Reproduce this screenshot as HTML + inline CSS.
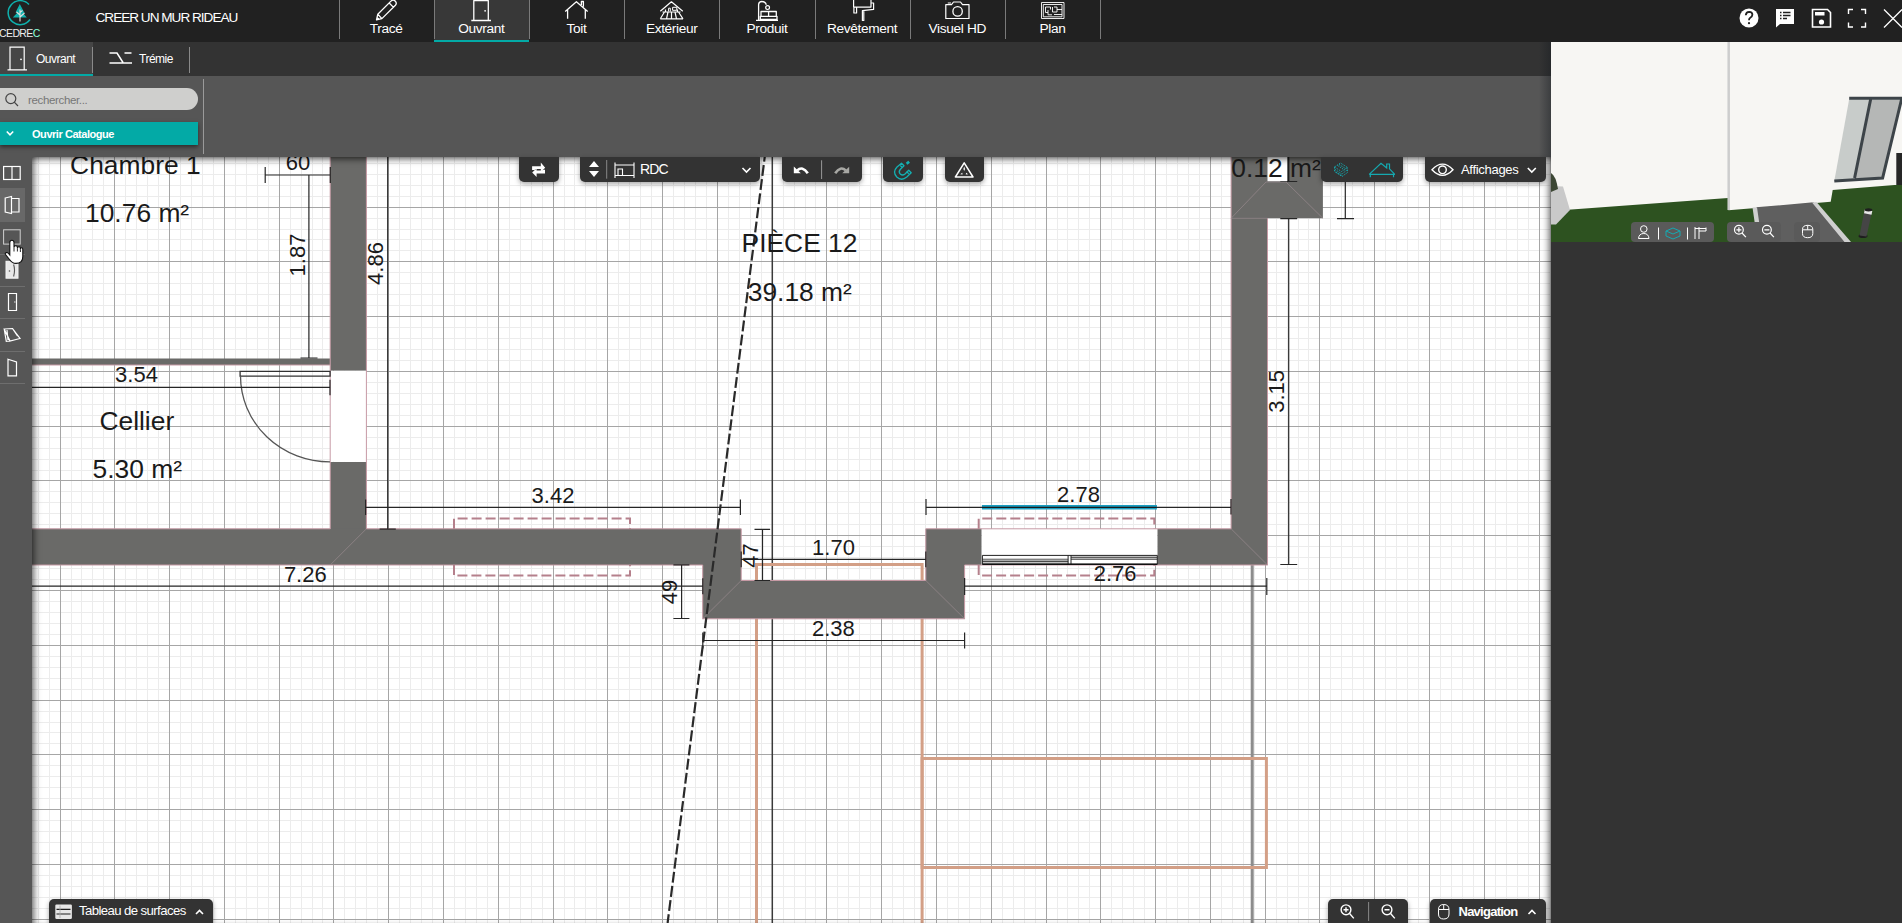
<!DOCTYPE html>
<html><head><meta charset="utf-8"><title>Cedreo</title><style>html,body{margin:0;padding:0;width:1902px;height:923px;overflow:hidden;background:#212121;font-family:"Liberation Sans",sans-serif}
.a{position:absolute}
.tab{text-align:center;font-size:13.7px;color:#fff;line-height:16px;letter-spacing:-0.35px}
.sb{font-size:12px;color:#fff;line-height:14px;letter-spacing:-0.5px}
</style></head><body>
<div class="a" style="left:0;top:0;width:1902px;height:42px;background:#212121"></div>
<svg class="a" style="left:0;top:0" width="44" height="40" viewBox="0 0 44 40">
<path d="M29 4.5 A12 12 0 1 0 30 19.5" stroke="#0fb1ad" stroke-width="1.5" fill="none"/>
<path d="M19.8 4 L15.5 12.5 L17.5 12.5 L12.8 17.5 L26.8 17.5 L23 13 L24.5 13Z" fill="#0fb1ad"/>
<path d="M20 21.5 V9.5 M20 15 L16.5 12 M20 17 L24.5 13 M20 12.5 L22.5 10.5" stroke="#e0e0e0" stroke-width="1.1" fill="none"/>
</svg>
<div class="a" style="left:-1px;top:27px;font-size:10.5px;color:#eee;letter-spacing:-0.6px;line-height:12px">CEDRE<span style="color:#8fd">C</span></div>
<div class="a t" style="left:95.5px;top:9.5px;font-size:13.6px;color:#fff;line-height:16px;letter-spacing:-1.0px">CREER UN MUR RIDEAU</div>
<div class="a" style="left:338.5px;top:0;width:1px;height:39px;background:#7a7a7a"></div>
<div class="a tab" style="left:338.5px;top:21.3px;width:95.2px">Tracé</div>
<div class="a" style="left:433.7px;top:0;width:95.2px;height:40px;background:#383838"></div>
<div class="a" style="left:433.7px;top:40px;width:95.2px;height:2px;background:#03aaa6"></div>
<div class="a" style="left:433.7px;top:0;width:1px;height:39px;background:#7a7a7a"></div>
<div class="a tab" style="left:433.7px;top:21.3px;width:95.2px">Ouvrant</div>
<div class="a" style="left:528.9px;top:0;width:1px;height:39px;background:#7a7a7a"></div>
<div class="a tab" style="left:528.9px;top:21.3px;width:95.2px">Toit</div>
<div class="a" style="left:624.1px;top:0;width:1px;height:39px;background:#7a7a7a"></div>
<div class="a tab" style="left:624.1px;top:21.3px;width:95.2px">Extérieur</div>
<div class="a" style="left:719.3px;top:0;width:1px;height:39px;background:#7a7a7a"></div>
<div class="a tab" style="left:719.3px;top:21.3px;width:95.2px">Produit</div>
<div class="a" style="left:814.5px;top:0;width:1px;height:39px;background:#7a7a7a"></div>
<div class="a tab" style="left:814.5px;top:21.3px;width:95.2px">Revêtement</div>
<div class="a" style="left:909.7px;top:0;width:1px;height:39px;background:#7a7a7a"></div>
<div class="a tab" style="left:909.7px;top:21.3px;width:95.2px">Visuel HD</div>
<div class="a" style="left:1004.9px;top:0;width:1px;height:39px;background:#7a7a7a"></div>
<div class="a tab" style="left:1004.9px;top:21.3px;width:95.2px">Plan</div>
<svg class="a" style="left:330px;top:0" width="780" height="24" viewBox="330 0 780 24">
<g stroke="#fff" fill="none" stroke-width="1.3" stroke-linejoin="round">
<path d="M376.5 19.8 L377.8 14.2 L391.2 0.9 Q393.3 -0.8 395.3 1.2 Q397.2 3.3 395.4 5.3 L381.9 18.6 Z M377.8 14.2 L381.9 18.6 M389.2 3 L393.3 7.1 M377 17.5 L379 19.3"/>
<path d="M473.8 20.3 V0.6 H488.3 V20.3 M471.3 20.5 H491"/><circle cx="485.1" cy="10.8" r="0.9" fill="#fff" stroke="none"/>
<path d="M565.2 11.5 L576.4 1.8 L587.7 11.5 M567.6 9.5 V18.8 M585.3 9.5 V18.8 M581.4 5 V1.5 H583.4 V6.8"/>
<path d="M660.3 11.3 L671.4 1.8 L682.8 11.3 M662.5 12 H680.5 M660.3 18.8 H683 M664.5 12 L660.3 18.8 M668 12 L666.5 18.8 M671.5 12 V18.8 M675 12 L676.5 18.8 M678.5 12 L683 18.8 M665.5 9.5 V12 M677.5 9.5 V12" stroke-width="1.2"/>
<path d="M668.6 11.5 V8.2 H670.3 V11.5 M672.6 7.3 H676.8 V10.3 H672.6Z" stroke-width="1"/>
<path d="M758.6 20 V4.5 Q758.8 1.5 762 1.5 Q765.3 1.5 766.3 4.8 M756 20.3 H778 M761 16 V11.5 H776.3 V16 M760.3 16.3 H777 V19.5 H760.3Z M768.6 11.5 V16.3"/>
<circle cx="767.6" cy="7.6" r="1.9" stroke-width="1.2"/>
<path d="M853.6 -1 V7.1 H871 V-1 M871 3 H873.6 V9.4 L862.4 10.6 V20.5 H863.8 V10.6 M853.9 7.1 V13 H856.6 V7.1" stroke-width="1.2"/>
<path d="M945.8 4.6 H951.5 L953.5 2 H960.5 L962.5 4.6 H969 V18.5 H945.8Z M947.8 3 H951" stroke-width="1.2"/>
<circle cx="957.6" cy="11.4" r="4.7" stroke-width="1.3"/>
<path d="M1041.5 2.5 H1064 V18.5 H1041.5Z M1043.3 4.5 H1062 V16.8 H1043.3Z M1045.5 7 H1050.5 V9.5 M1045.5 7V12.5 H1048 M1048 10V14.8 H1052 M1052.5 7V12 H1057 V7 H1054 M1057 9.5H1062 M1054 14.5H1062" stroke-width="0.9"/>
</g></svg>
<div class="a" style="left:1100.1px;top:0;width:1px;height:39px;background:#7a7a7a"></div>
<svg class="a" style="left:1735px;top:5px" width="167" height="26" viewBox="1735 5 167 26">
<circle cx="1749" cy="18" r="9.5" fill="#fff"/>
<path d="M1745.8 15.2 Q1746 11.8 1749.2 11.8 Q1752.4 12 1752.4 14.8 Q1752.3 16.8 1750 18 Q1749 18.7 1749 20.3" stroke="#212121" stroke-width="1.8" fill="none"/>
<circle cx="1749" cy="23.2" r="1.1" fill="#212121"/>
<path d="M1776 9 H1794 V24 H1780 L1776 27.5Z" fill="#fff"/>
<path d="M1780 12.5H1781.5 M1783 12.5H1790.5 M1780 15.5H1781.5 M1783 15.5H1790.5 M1780 18.5H1781.5 M1783 18.5H1787" stroke="#212121" stroke-width="1.5"/>
<path d="M1812.5 9.5 H1827.5 L1830.5 12.5 V27 H1812.5Z" stroke="#fff" stroke-width="1.6" fill="none"/>
<rect x="1815" y="12" width="9.5" height="3.5" fill="#fff"/>
<circle cx="1821.5" cy="22" r="2.6" fill="#fff"/>
<path d="M1848.5 14 V9.5 H1853 M1861 9.5 H1865.5 V14 M1865.5 22.5 V27 H1861 M1853 27 H1848.5 V22.5" stroke="#fff" stroke-width="1.4" fill="none"/>
<path d="M1884 9.5 L1902 27.5 M1902 9.5 L1884 27.5" stroke="#fff" stroke-width="1.3"/>
</svg>
<div class="a" style="left:0;top:42px;width:1551px;height:34px;background:#333"></div>
<div class="a" style="left:0;top:42px;width:93px;height:32px;background:#464646"></div>
<div class="a" style="left:0;top:74px;width:93px;height:2px;background:#03aaa6"></div>
<div class="a" style="left:92px;top:47px;width:1px;height:26px;background:#8a8a8a"></div>
<div class="a" style="left:189px;top:47px;width:1px;height:26px;background:#8a8a8a"></div>
<svg class="a" style="left:6px;top:46px" width="24" height="26" viewBox="0 0 24 26"><path d="M4 23.5V1.2H18.2V23.5 M1.5 23.8H21" stroke="#fff" stroke-width="1.2" fill="none"/><circle cx="15" cy="13.3" r="0.9" fill="#fff"/></svg>
<div class="a sb" style="left:36px;top:52px">Ouvrant</div>
<svg class="a" style="left:107px;top:50px" width="28" height="20" viewBox="0 0 28 20"><path d="M2.5 3H10 L16 12.5 M2.5 13H25 M17.5 3H24.5" stroke="#fff" stroke-width="1.5" fill="none"/></svg>
<div class="a sb" style="left:139px;top:52px">Trémie</div>
<div class="a" style="left:0;top:76px;width:1551px;height:81px;background:#565656"></div>
<div class="a" style="left:1539px;top:42px;width:12px;height:115px;background:linear-gradient(to right,rgba(20,25,30,0),rgba(20,25,30,0.4))"></div>
<div class="a" style="left:203px;top:79px;width:1px;height:75px;background:#9a9a9a"></div>
<div class="a" style="left:-12px;top:88px;width:210px;height:22px;border-radius:11px;background:#cfcfcd"></div>
<svg class="a" style="left:4px;top:92px" width="16" height="16" viewBox="0 0 16 16"><circle cx="6.8" cy="6.6" r="5" stroke="#444" stroke-width="1.2" fill="none"/><path d="M10.3 10.2L14 14" stroke="#444" stroke-width="1.2"/></svg>
<div class="a" style="left:28px;top:93px;font-size:11.5px;color:#767676;line-height:14px;letter-spacing:-0.35px">rechercher...</div>
<div class="a" style="left:0;top:122px;width:198px;height:23px;background:#03aaa6;box-shadow:0 2px 4px rgba(0,0,0,0.5)"></div>
<svg class="a" style="left:5px;top:129px" width="10" height="9" viewBox="0 0 10 9"><path d="M1.8 2.5L5 5.8L8.2 2.5" stroke="#fff" stroke-width="1.6" fill="none"/></svg>
<div class="a" style="left:32px;top:127px;font-size:11px;font-weight:bold;color:#fff;line-height:14px;letter-spacing:-0.45px">Ouvrir Catalogue</div>
<svg class="a" style="left:0;top:0" width="1902" height="923" viewBox="0 0 1902 923"><defs><clipPath id="cv"><rect x="32" y="157" width="1519" height="766"/></clipPath></defs><g clip-path="url(#cv)"><rect x="32" y="157" width="1519" height="766" fill="#fff"/><path d="M38.5 157V923M49.5 157V923M71.5 157V923M81.5 157V923M92.5 157V923M103.5 157V923M125.5 157V923M136.5 157V923M147.5 157V923M158.5 157V923M180.5 157V923M191.5 157V923M202.5 157V923M213.5 157V923M235.5 157V923M246.5 157V923M257.5 157V923M268.5 157V923M290.5 157V923M301.5 157V923M312.5 157V923M322.5 157V923M344.5 157V923M355.5 157V923M366.5 157V923M377.5 157V923M399.5 157V923M410.5 157V923M421.5 157V923M432.5 157V923M454.5 157V923M465.5 157V923M476.5 157V923M487.5 157V923M509.5 157V923M520.5 157V923M531.5 157V923M542.5 157V923M564.5 157V923M574.5 157V923M585.5 157V923M596.5 157V923M618.5 157V923M629.5 157V923M640.5 157V923M651.5 157V923M673.5 157V923M684.5 157V923M695.5 157V923M706.5 157V923M728.5 157V923M739.5 157V923M750.5 157V923M761.5 157V923M783.5 157V923M794.5 157V923M805.5 157V923M815.5 157V923M837.5 157V923M848.5 157V923M859.5 157V923M870.5 157V923M892.5 157V923M903.5 157V923M914.5 157V923M925.5 157V923M947.5 157V923M958.5 157V923M969.5 157V923M980.5 157V923M1002.5 157V923M1013.5 157V923M1024.5 157V923M1035.5 157V923M1057.5 157V923M1067.5 157V923M1078.5 157V923M1089.5 157V923M1111.5 157V923M1122.5 157V923M1133.5 157V923M1144.5 157V923M1166.5 157V923M1177.5 157V923M1188.5 157V923M1199.5 157V923M1221.5 157V923M1232.5 157V923M1243.5 157V923M1254.5 157V923M1276.5 157V923M1287.5 157V923M1298.5 157V923M1308.5 157V923M1330.5 157V923M1341.5 157V923M1352.5 157V923M1363.5 157V923M1385.5 157V923M1396.5 157V923M1407.5 157V923M1418.5 157V923M1440.5 157V923M1451.5 157V923M1462.5 157V923M1473.5 157V923M1495.5 157V923M1506.5 157V923M1517.5 157V923M1528.5 157V923M1550.5 157V923M32 163.5H1551M32 174.5H1551M32 185.5H1551M32 196.5H1551M32 218.5H1551M32 229.5H1551M32 239.5H1551M32 250.5H1551M32 272.5H1551M32 283.5H1551M32 294.5H1551M32 305.5H1551M32 327.5H1551M32 338.5H1551M32 349.5H1551M32 360.5H1551M32 382.5H1551M32 393.5H1551M32 404.5H1551M32 415.5H1551M32 437.5H1551M32 448.5H1551M32 459.5H1551M32 470.5H1551M32 491.5H1551M32 502.5H1551M32 513.5H1551M32 524.5H1551M32 546.5H1551M32 557.5H1551M32 568.5H1551M32 579.5H1551M32 601.5H1551M32 612.5H1551M32 623.5H1551M32 634.5H1551M32 656.5H1551M32 667.5H1551M32 678.5H1551M32 689.5H1551M32 711.5H1551M32 722.5H1551M32 732.5H1551M32 743.5H1551M32 765.5H1551M32 776.5H1551M32 787.5H1551M32 798.5H1551M32 820.5H1551M32 831.5H1551M32 842.5H1551M32 853.5H1551M32 875.5H1551M32 886.5H1551M32 897.5H1551M32 908.5H1551" stroke="#ececec" stroke-width="1" fill="none"/>
<path d="M60.5 157V923M114.5 157V923M169.5 157V923M224.5 157V923M279.5 157V923M333.5 157V923M388.5 157V923M443.5 157V923M498.5 157V923M553.5 157V923M607.5 157V923M662.5 157V923M717.5 157V923M772.5 157V923M826.5 157V923M881.5 157V923M936.5 157V923M991.5 157V923M1046.5 157V923M1100.5 157V923M1155.5 157V923M1210.5 157V923M1265.5 157V923M1319.5 157V923M1374.5 157V923M1429.5 157V923M1484.5 157V923M1539.5 157V923M32 207.5H1551M32 261.5H1551M32 316.5H1551M32 371.5H1551M32 426.5H1551M32 480.5H1551M32 535.5H1551M32 590.5H1551M32 645.5H1551M32 700.5H1551M32 754.5H1551M32 809.5H1551M32 864.5H1551M32 919.5H1551" stroke="#a6a6a6" stroke-width="1" fill="none"/><path d="M772.3 157V923" stroke="#3a3a3a" stroke-width="1.5"/>
<path d="M1252.2 565V923" stroke="#8c8c8c" stroke-width="3"/>
<path d="M756.5 923V564.6H922.1V923" stroke="#d39f86" stroke-width="3" fill="none"/>
<rect x="922.1" y="758.5" width="344.3" height="109" stroke="#d39f86" stroke-width="3" fill="none"/>
<path d="M330.2 157H366.4V370.8H330.2Z M330.2 461.9H366.4V529H330.2Z" fill="#6a6a68"/>
<path d="M32 358.5H330.2V365H32Z" fill="#6a6a68"/>
<path d="M32 528.8H741.2V580.5H925.8V528.8H981.7V565H964.6V618.8H702.7V565H32Z" fill="#6a6a68"/>
<path d="M1231.1 157H1322.9V218.3H1267.5V565H1157.3V528.8H1231.1Z" fill="#6a6a68"/>
<rect x="330.2" y="370.8" width="36.2" height="91.1" fill="#fff"/><rect x="981.7" y="528.8" width="175.6" height="36.2" fill="#fff"/>
<path d="M330.2 157V529M366.4 157V529 M32 365H330.2 M32 528.8H330.2M366.4 528.8H741.2V580.5H925.8V528.8H1157.3 M32 565H702.7V618.8H964.6V565H1267.5V218.3 M1157.3 528.8H1231.1V157" stroke="#c79aa5" stroke-width="1" fill="none"/>
<path d="M330.2 565L366.4 528.8 M702.7 618.8L741.2 580.5 M964.6 618.8L925.8 580.5 M1231.1 528.8L1267.5 565 M1231.1 218.3L1266 182H1286L1322.9 218.3 M1231.1 218.3H1267.5" stroke="#9a8a8f" stroke-width="0.9" fill="none" opacity="0.75"/>
<path d="M240.1 371.3H330.1V376.1H240.1Z" stroke="#333" stroke-width="1.3" fill="none"/>
<path d="M240.5 376 A89.5 86 0 0 0 330 461.9" stroke="#555" stroke-width="1.3" fill="none"/>
<rect x="982.4" y="559.2" width="85.7" height="4.8" fill="#c2c2c2"/><rect x="1071" y="555.9" width="86" height="3.5" fill="#bdbdbd"/>
<path d="M982.4 559.2H1068.1 M1071 557.5H1157 M1071 559.4H1157" stroke="#555" stroke-width="0.9" fill="none"/>
<path d="M982.4 561.35H1068.1" stroke="#333" stroke-width="1" fill="none"/>
<path d="M982.4 555.4H1157.3V564.3H982.4Z M1068.1 555.4V564.3 M1071 555.4V564.3" stroke="#222" stroke-width="1" fill="none"/>
<path d="M982.4 564.2H1157.3" stroke="#111" stroke-width="1.4"/>
<path d="M454 528.8V518.4H630V528.8 M454 565V575.6H630V565 M978.7 528.8V518.4H1154.3V528.8 M978.7 565V575.6H1154.3V565" stroke="#b5808c" stroke-width="2" stroke-dasharray="10 4" fill="none"/>
<path d="M265.2 175H330.3 M265.2 167V183 M330.3 167V183 M308.9 175V358 M300.5 358H317.5 M387.7 157V529.2 M379.6 529.2H395.8 M32 387.4H330 M330 379.7V395.2 M365.6 507.3H740.4 M365.6 499.5V515.1 M740.4 499.5V515.1 M926 507.3H1231 M926 499V515 M1231 499V514.6 M741.2 559.4H925.8 M741.2 551.5V567.2 M925.8 551.5V567.2 M762.5 529.3V580.5 M754.5 529.3H770.1 M754.5 580.5H770.1 M681.6 564.8V618.5 M673.4 564.8H689.4 M673.4 618.5H689.4 M32 586.2H702.8 M702.8 578.2V594.2 M964.6 586.2H1266.8 M964.6 578V595 M1266.8 578V595 M702.8 640.5H964.6 M702.8 632.5V648.5 M964.6 632.5V648.5 M1288.7 218.6V564.5 M1280.3 564.5H1297.2 M1280.3 218.6H1297.2 M1280.3 181.5H1297.2 M1345.3 182V218.6 M1337 218.6H1354" stroke="#262626" stroke-width="1.2" fill="none"/>
<path d="M981.9 507.3H1156.9" stroke="#1b9ec0" stroke-width="4.4"/>
<path d="M981.9 507.3H1156.9" stroke="#1a1a1a" stroke-width="1.2"/>
<rect x="1267.5" y="157" width="19.5" height="24.2" fill="#fff"/>
<path d="M1288.7 157V181" stroke="#1a1a1a" stroke-width="1.3"/>
<path d="M766.0 147 L667.6 923" stroke="#2a2a2a" stroke-width="2.2" stroke-dasharray="10.9 3.35" stroke-dashoffset="-3.9" fill="none"/>
<g fill="#1a1a1a" font-family="Liberation Sans, sans-serif"><text x="135.4" y="174" font-size="26.4" text-anchor="middle">Chambre 1</text><text x="137.1" y="222" font-size="26.4" text-anchor="middle">10.76 m²</text><text x="136.8" y="430" font-size="26.4" text-anchor="middle">Cellier</text><text x="137.2" y="477.6" font-size="26.4" text-anchor="middle">5.30 m²</text><text x="799.5" y="252.2" font-size="26.4" text-anchor="middle">PIÈCE 12</text><text x="799.8" y="300.5" font-size="26.4" text-anchor="middle">39.18 m²</text><text x="1276" y="177.1" font-size="26.4" text-anchor="middle">0.12 m²</text><text x="297.9" y="170" font-size="22" text-anchor="middle">60</text><text x="136.5" y="381.8" font-size="22" text-anchor="middle">3.54</text><text x="553" y="502.6" font-size="22" text-anchor="middle">3.42</text><text x="1078.5" y="501.8" font-size="22" text-anchor="middle">2.78</text><text x="833.5" y="554.7" font-size="22" text-anchor="middle">1.70</text><text x="305.3" y="581.9" font-size="22" text-anchor="middle">7.26</text><text x="1115.1" y="581.4" font-size="22" text-anchor="middle">2.76</text><text x="833.4" y="635.6" font-size="22" text-anchor="middle">2.38</text><text x="304.7" y="255" font-size="22" text-anchor="middle" transform="rotate(-90 304.7 255)">1.87</text><text x="383.3" y="263.5" font-size="22" text-anchor="middle" transform="rotate(-90 383.3 263.5)">4.86</text><text x="758" y="555.6" font-size="22" text-anchor="middle" transform="rotate(-90 758 555.6)">47</text><text x="676.8" y="591.9" font-size="22" text-anchor="middle" transform="rotate(-90 676.8 591.9)">49</text><text x="1284.5" y="391.4" font-size="22" text-anchor="middle" transform="rotate(-90 1284.5 391.4)">3.15</text></g></g></svg>
<div class="a" style="left:32px;top:157px;width:1519px;height:766px;box-shadow:inset 7px 0 7px -5px rgba(0,0,0,0.6),inset -7px 0 7px -5px rgba(0,0,0,0.6),inset 0 7px 7px -5px rgba(0,0,0,0.6)"></div>
<div class="a" style="left:0;top:157px;width:32px;height:766px;background:#565656"></div>
<div class="a" style="left:0;top:188px;width:25px;height:33.5px;background:#686868"></div>
<div class="a" style="left:0;top:253.6px;width:25px;height:1px;background:#6e6e6e"></div>
<div class="a" style="left:0;top:286.0px;width:25px;height:1px;background:#6e6e6e"></div>
<div class="a" style="left:0;top:318.4px;width:25px;height:1px;background:#6e6e6e"></div>
<div class="a" style="left:0;top:350.8px;width:25px;height:1px;background:#6e6e6e"></div>
<div class="a" style="left:0;top:383.0px;width:25px;height:1px;background:#6e6e6e"></div>
<svg class="a" style="left:0;top:157px" width="32" height="230" viewBox="0 157 32 230">
<g stroke="#fff" stroke-width="1.2" fill="none">
<rect x="3.6" y="166.5" width="16.6" height="13"/><path d="M12 166.5V179.5"/>
<path d="M5.2 198 L11.5 196.5 V213.5 L5.2 212 Z M11.5 198.5H19V212H11.5"/>
<rect x="3.6" y="229.8" width="16.6" height="14.3" stroke="#d0d0d0" stroke-width="1"/>
<path d="M8.5 293.5 H16.5 V310.5 H8.5Z M14.8 301.5V302.5"/>
<path d="M4.2 329 L12.5 328.5 L20 338.5 L10 341 Z M4.2 329 L6.3 341.3 L10 341 M7 330 L8 340 M12.5 328.5 L17.5 336"/>
<path d="M8 359.2 L16.5 362 V375.8 H8Z"/>
</g>
<rect x="6" y="261.3" width="12" height="16.9" fill="#e8e8e8" stroke="#f4f4f4" stroke-width="1"/>
<circle cx="9.5" cy="271" r="0.8" fill="#555"/>
<path d="M13.6 264.5 Q15.5 270 13.6 276.5" stroke="#555" stroke-width="1.1" fill="none"/>
<path d="M9.8 253 L9.8 242.5 Q9.8 240.3 11.9 240.3 Q14 240.3 14 242.5 L14 247.5 Q14 245.8 15.7 245.8 Q17.4 245.8 17.4 247.5 L17.4 248.5 Q17.4 246.8 18.9 246.8 Q20.4 246.8 20.4 248.5 L20.4 249.5 Q20.4 247.8 21.6 247.8 Q22.8 247.8 22.8 249.5 L22.8 256.5 Q22.8 263.4 16 263.4 Q12 263.4 9.5 259.5 L5.5 254.5 Q4.8 253 6.3 252.6 Q7.5 252.3 8.5 253.5 L9.8 255 Z" fill="#fff" stroke="#111" stroke-width="1.1"/>
<path d="M14 247.5V251.5 M17.4 248.5V251.5 M20.4 249.5V252" stroke="#111" stroke-width="0.9"/>
</svg>
<div class="a" style="left:519px;top:157px;width:40.0px;height:24.7px;background:#333;border-radius:0 0 5px 5px;box-shadow:0 2px 5px rgba(0,0,0,0.35)"></div>
<div class="a" style="left:580px;top:157px;width:180.0px;height:24.7px;background:#333;border-radius:0 0 5px 5px;box-shadow:0 2px 5px rgba(0,0,0,0.35)"></div>
<div class="a" style="left:782px;top:157px;width:80.0px;height:24.7px;background:#333;border-radius:0 0 5px 5px;box-shadow:0 2px 5px rgba(0,0,0,0.35)"></div>
<div class="a" style="left:883px;top:157px;width:39.6px;height:24.7px;background:#333;border-radius:0 0 5px 5px;box-shadow:0 2px 5px rgba(0,0,0,0.35)"></div>
<div class="a" style="left:945px;top:157px;width:39.0px;height:24.7px;background:#333;border-radius:0 0 5px 5px;box-shadow:0 2px 5px rgba(0,0,0,0.35)"></div>
<div class="a" style="left:1321.2px;top:157px;width:81.5px;height:24.7px;background:#333;border-radius:0 0 5px 5px;box-shadow:0 2px 5px rgba(0,0,0,0.35)"></div>
<div class="a" style="left:1425px;top:157px;width:121.0px;height:24.7px;background:#333;border-radius:0 0 5px 5px;box-shadow:0 2px 5px rgba(0,0,0,0.35)"></div>
<svg class="a" style="left:0;top:0;pointer-events:none" width="1902" height="923" viewBox="0 0 1902 923">
<path d="M533.5 170V167.7 H541.5 M535.8 172 H543.6 V169.8" stroke="#fff" stroke-width="2.8" fill="none"/>
<path d="M540.8 162.5 L545.2 167.7 L540.8 171.8Z M536.6 168.2 L532.2 172.4 L536.6 177Z" fill="#fff"/>
<path d="M589 167 L594 161 L599 167Z M589 171 L594 177 L599 171Z" fill="#fff"/>
<path d="M606.7 160V178.7" stroke="#888" stroke-width="1"/>
<g stroke="#fff" stroke-width="1.1" fill="none"><path d="M615 162.5V178 M634 162.5V178 M615 165H634 M615 175.5H634 M618 175.5V169H622.5V175.5"/></g>
<path d="M742.5 168L746.5 172L750.5 168" stroke="#fff" stroke-width="1.6" fill="none"/>
<path d="M793.8 166.5 V173.3 H800.8Z" fill="#fff"/>
<path d="M797.2 170.4 Q802.5 165.6 807.8 173.3" stroke="#fff" stroke-width="2.6" fill="none"/>
<path d="M821.6 160.3V179" stroke="#999" stroke-width="1"/>
<path d="M849.2 166.8 V173.3 H842.2Z" fill="#a8a8a4"/>
<path d="M845.8 170.4 Q840.5 165.6 835.2 173.3" stroke="#a8a8a4" stroke-width="2.6" fill="none"/>
<g stroke="#14b0b2" stroke-width="1.3" fill="none" stroke-linejoin="round">
<path d="M901.5 163.2 L904 165.7 L900.2 169.5 Q898.2 172 900.3 174 Q902.5 176 905 174 L908.7 170.2 L911.2 172.7 L906.8 177 Q901.5 181.5 896.8 177 Q892.2 172 897 167Z"/>
<path d="M900.3 165.5 L902.4 167.6 M906.6 171.6 L908.8 173.8 M906.2 163.2 L908.3 161.5 L907.4 164 L909.6 162.3"/>
</g>
<path d="M964.2 162.8 L973 177 H955.4Z" stroke="#fff" stroke-width="1.5" fill="none" stroke-linejoin="round"/>
<path d="M964.2 166.5 L965 169 L964.2 171 L963.4 169Z M960.2 174.3 L962.3 172.7 L962.6 174.6Z M968.2 174.3 L966.1 172.7 L965.8 174.6Z" fill="#fff"/>
<g stroke="#15a9b0" stroke-width="1" fill="none"><path d="M1334.5 167 L1340.5 163 L1347.5 167.5 L1341.5 171.5 Z M1334.5 167 V171.5 L1342 176.5 L1347.5 172.5 V167.5" stroke-width="0.9" stroke-dasharray="1.6 1.1"/><path d="M1335 169.5 L1342 174 L1347 170 M1336 172 L1342 175.5 M1337.5 165.5 L1344.5 170 M1339 164.5 L1346 168.8" stroke-width="1" stroke-dasharray="1.4 1.2"/>
<path d="M1369.2 174.4 L1381 163.3 L1386.7 168 V164 H1389.5 V168.8 L1394.8 174.4 M1369.2 174.4 H1395 M1370.3 174.4 V177.3 M1393.5 174.4 V177.3" stroke-width="1.2"/></g>
<g stroke="#fff" stroke-width="1.4" fill="none"><path d="M1432 169.8 Q1442.5 158.5 1453 169.8 Q1442.5 181 1432 169.8Z"/><circle cx="1442.5" cy="169.8" r="3.8"/></g>
<path d="M1527.8 168L1531.8 172L1535.8 168" stroke="#fff" stroke-width="1.6" fill="none"/>
</svg>
<div class="a" style="left:640px;top:161px;font-size:14px;color:#fff;line-height:16px;letter-spacing:-0.8px">RDC</div>
<div class="a" style="left:1461px;top:161.5px;font-size:13px;color:#fff;line-height:15px;letter-spacing:-0.3px">Affichages</div>
<div class="a" style="left:49px;top:899px;width:164.0px;height:24.5px;background:#333;border-radius:5px 5px 0 0;box-shadow:0 2px 5px rgba(0,0,0,0.35)"></div>
<div class="a" style="left:1328.2px;top:899px;width:79.8px;height:24.5px;background:#333;border-radius:5px 5px 0 0;box-shadow:0 2px 5px rgba(0,0,0,0.35)"></div>
<div class="a" style="left:1430.2px;top:899px;width:115.8px;height:24.5px;background:#333;border-radius:5px 5px 0 0;box-shadow:0 2px 5px rgba(0,0,0,0.35)"></div>
<svg class="a" style="left:0;top:0;pointer-events:none" width="1902" height="923" viewBox="0 0 1902 923">
<rect x="55.3" y="904.5" width="16.6" height="14.5" rx="1.2" fill="#e6e6e6"/><path d="M56.5 909.4H70.5 M56.5 914H70.5" stroke="#1e1e1e" stroke-width="1.1"/><path d="M60 905.5V918" stroke="#aaa" stroke-width="0.8"/>
<path d="M196 914L199.5 910.5L203 914" stroke="#fff" stroke-width="1.6" fill="none"/>
<g stroke="#fff" stroke-width="1.4" fill="none"><circle cx="1346" cy="909.8" r="4.9"/><path d="M1349.6 913.5L1353.8 918.4 M1346 907.3V912.3 M1343.5 909.8H1348.5"/>
<circle cx="1387" cy="909.8" r="4.9"/><path d="M1390.6 913.5L1394.8 918.4 M1384.5 909.8H1389.5"/>
<path d="M1438.5 909.5 Q1438.5 904.5 1443.7 904.5 Q1449 904.5 1449 909.5 V914 Q1449 919 1443.7 919 Q1438.5 919 1438.5 914Z M1443.7 904.5V909.5 M1438.5 909.5H1449" stroke-width="1"/></g>
<path d="M1368.6 902V921" stroke="#888" stroke-width="1"/>
<path d="M1528.5 914L1532 910.5L1535.5 914" stroke="#fff" stroke-width="1.6" fill="none"/>
</svg>
<div class="a" style="left:79px;top:903px;font-size:13.2px;color:#fff;line-height:15px;letter-spacing:-0.6px">Tableau de surfaces</div>
<div class="a" style="left:1458.5px;top:904px;font-size:13px;color:#fff;line-height:15px;font-weight:bold;letter-spacing:-0.75px">Navigation</div>
<div class="a" style="left:1551px;top:242px;width:351px;height:681px;background:#333"></div>
<svg class="a" style="left:1551px;top:42px" width="351" height="200" viewBox="1551 42 351 200">
<rect x="1551" y="42" width="351" height="200" fill="#f7f6f3"/>
<path d="M1551 211 L1728 198 L1728.5 210.3 L1830.7 201.8 L1832.7 189.9 L1894.5 184.9 L1902 184.9 V242 H1551Z" fill="#2d5220"/>
<path d="M1756 207.3 L1813.5 202.3 L1847 242 H1760Z" fill="#5f5f5f"/>
<path d="M1752.5 207.5 L1757 207.2 L1762 242 H1757.5Z M1812 202.6 L1816.5 202.1 L1851 242 H1844.5Z" fill="#cfcfcf"/>
<path d="M1728.7 42 V210" stroke="#cdcdcd" stroke-width="2.5"/>
<path d="M1849.2 99 H1901 L1882.6 178 L1834.3 181Z" fill="#c8ccca"/>
<path d="M1871 100 H1901 L1882.6 178 L1855 178Z" fill="#b5b7b6"/>
<path d="M1849.2 98.3 H1902 M1834.3 181 L1882.6 178 L1901.5 99.5 M1870.7 99 L1854.6 178" stroke="#3d4449" stroke-width="3" fill="none"/>
<rect x="1896.3" y="153" width="5.7" height="32" fill="#262626"/>
<ellipse cx="1863" cy="236" rx="4.5" ry="2" fill="#1e1e1e"/>
<path d="M1864.5 210 L1872 211.5 L1866.5 236.5 L1859.5 235.5Z" fill="#454545"/>
<path d="M1864.8 209.5 L1872.3 211 L1871.5 214.8 L1864 213.3Z" fill="#e8e8e8"/>
<ellipse cx="1868.5" cy="209.8" rx="3.8" ry="1.6" fill="#1e1e1e"/>
<path d="M1551 186 L1563 186.5 L1570 210 L1556 224.5 L1551 224.5Z" fill="#c9c9c9"/>
<path d="M1551 173 Q1556 176 1558 189 L1551 192Z" fill="#3c4734"/>
<rect x="1631" y="222" width="83" height="20" rx="4" fill="#5a5a5a"/>
<rect x="1727" y="222" width="54" height="20" rx="4" fill="#5a5a5a"/>
<rect x="1794" y="222" width="26" height="20" rx="4" fill="#5a5a5a"/>
<g stroke="#fff" stroke-width="1" fill="none">
<circle cx="1643.8" cy="229" r="3.3"/><path d="M1638.5 238.5 Q1639 233.5 1643.8 233.5 Q1648.5 233.5 1649 238.5Z"/>
<path d="M1658.5 227.5V239.5 M1687.5 227.5V239.5"/>
<path d="M1695 228.5 H1706 M1699 227V239 M1695 227V239 M1699 231H1706V227.5"/>
<circle cx="1738.9" cy="229.8" r="4.4" stroke-width="1.2"/><path d="M1742 233L1745.9 237.2 M1738.9 227.3V232.3 M1736.4 229.8H1741.4" stroke-width="1.2"/>
<circle cx="1766.9" cy="229.8" r="4.4" stroke-width="1.2"/><path d="M1770 233L1773.9 237.2 M1764.4 229.8H1769.4" stroke-width="1.2"/>
<path d="M1802.5 229.5 Q1802.5 225.3 1807.7 225.3 Q1812.8 225.3 1812.8 229.5 V233.5 Q1812.8 237.7 1807.7 237.7 Q1802.5 237.7 1802.5 233.5Z M1807.7 225.3V229.8 M1802.5 229.8H1812.8"/>
</g>
<path d="M1666 231 L1673 228 L1680 231 L1673 234Z M1666 231V236 L1673 239 L1680 236 V231" stroke="#16a8b0" stroke-width="1" fill="none"/>
</svg>
</body></html>
